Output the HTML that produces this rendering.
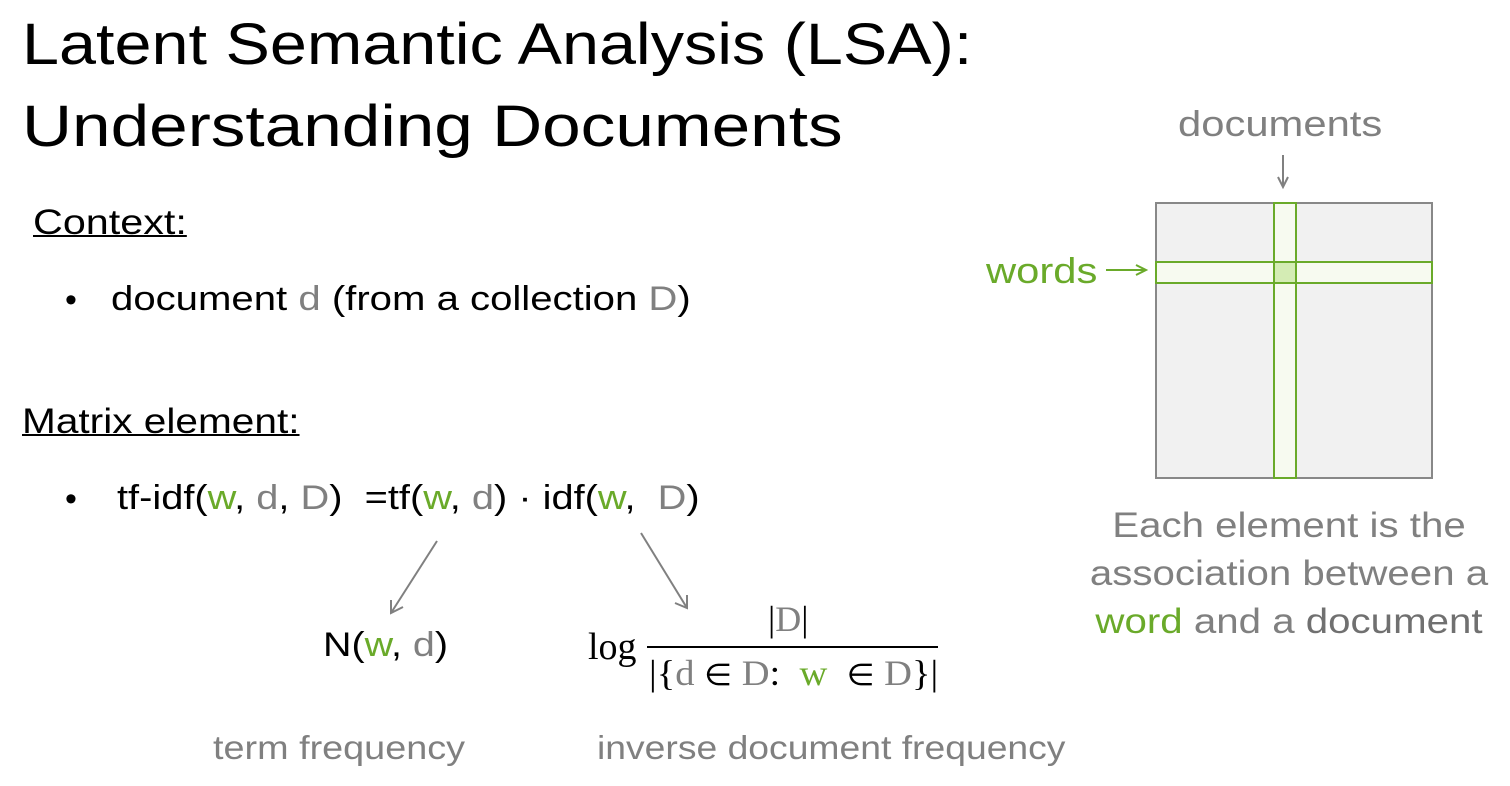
<!DOCTYPE html>
<html><head><meta charset="utf-8"><style>
body{margin:0;width:1510px;height:786px;background:#fff;position:relative;overflow:hidden;font-family:"Liberation Sans",sans-serif;color:#000}
.t{position:absolute;white-space:nowrap;line-height:1;transform-origin:left top}
.g{color:#808080}.gr{color:#6aaa2a}
.s{font-family:"Liberation Serif",serif}
</style></head><body>
<div class="t" style="left:22px;top:16px;font-size:58px;transform:scaleX(1.147)">Latent Semantic Analysis (LSA):</div>
<div class="t" style="left:22px;top:98px;font-size:58px;transform:scaleX(1.195)">Understanding Documents</div>
<div class="t" style="left:33px;top:205px;font-size:35px;text-decoration:underline;text-decoration-thickness:2px;transform:scaleX(1.18)">Context:</div>
<div class="t" style="left:65px;top:283px;font-size:34px">•</div>
<div class="t" style="left:111px;top:282px;font-size:34px;transform:scaleX(1.18)">document <span class="g">d</span> (from a collection <span class="g">D</span>)</div>
<div class="t" style="left:22px;top:404px;font-size:35px;text-decoration:underline;text-decoration-thickness:2px;transform:scaleX(1.16)">Matrix element:</div>
<div class="t" style="left:65px;top:482px;font-size:34px">•</div>
<div class="t" style="left:117px;top:481px;font-size:34px;transform:scaleX(1.17)">tf-idf(<span class="gr">w</span>, <span class="g">d</span>, <span class="g">D</span>) &nbsp;=tf(<span class="gr">w</span>, <span class="g">d</span>) · idf(<span class="gr">w</span>, &nbsp;<span class="g">D</span>)</div>
<svg style="position:absolute;left:0;top:0" width="1510" height="786">
<g stroke="#808080" stroke-width="2" fill="none">
<line x1="437" y1="541" x2="391" y2="613"/><polyline points="391,600 391,613 403,607"/>
<line x1="641" y1="533" x2="687" y2="608"/><polyline points="675,603 687,608 687,595"/>
<line x1="1283" y1="155" x2="1283" y2="187"/><polyline points="1278,177 1283,187 1288,177"/>
</g>
<line x1="647" y1="647" x2="938" y2="647" stroke="#000" stroke-width="2"/>
<rect x="1156" y="203" width="276" height="275" fill="#f1f1f1" stroke="#888" stroke-width="2"/>
<rect x="1274" y="203" width="22" height="275" fill="#f7faf0" stroke="#6aaa2a" stroke-width="2"/>
<rect x="1156" y="262" width="276" height="21" fill="#f7faf0" stroke="#6aaa2a" stroke-width="2"/>
<rect x="1275" y="263" width="20" height="19" fill="#d4ecb4"/>
<line x1="1274" y1="262" x2="1274" y2="283" stroke="#6aaa2a" stroke-width="2"/>
<line x1="1296" y1="262" x2="1296" y2="283" stroke="#6aaa2a" stroke-width="2"/>
<line x1="1106" y1="270" x2="1146" y2="270" stroke="#6aaa2a" stroke-width="2"/>
<polyline points="1136,265 1146,270 1136,275" stroke="#6aaa2a" stroke-width="2" fill="none"/>
</svg>
<div class="t" style="left:323px;top:628px;font-size:34px;transform:scaleX(1.16)">N(<span class="gr">w</span>, <span class="g">d</span>)</div>
<div class="t s" style="left:588px;top:628px;font-size:38px">log</div>
<div class="t s" style="left:768px;top:601px;font-size:36px">|<span class="g">D</span>|</div>
<div class="t s" style="left:649px;top:655px;font-size:36px;transform:scaleX(1.07)">|{<span class="g">d</span> <span style="font-family:'DejaVu Sans';font-size:30px">∈</span> <span class="g">D</span>: &nbsp;<span class="gr">w</span> &nbsp;<span style="font-family:'DejaVu Sans';font-size:30px">∈</span> <span class="g">D</span>}|</div>
<div class="t g" style="left:213px;top:731px;font-size:33px;transform:scaleX(1.145)">term frequency</div>
<div class="t g" style="left:597px;top:731px;font-size:33px;transform:scaleX(1.13)">inverse document frequency</div>
<div class="t g" style="left:1178px;top:106px;font-size:36px;transform:scaleX(1.16)">documents</div>
<div class="t gr" style="left:986px;top:253px;font-size:36px;transform:scaleX(1.16)">words</div>
<div class="t g" style="left:1089px;top:502px;width:400px;text-align:center;font-size:35px;line-height:48px;white-space:normal;transform:scaleX(1.15);transform-origin:center top">Each element is the association between a <span class="gr">word</span> and a <span style="color:#707070">document</span></div>
</body></html>
